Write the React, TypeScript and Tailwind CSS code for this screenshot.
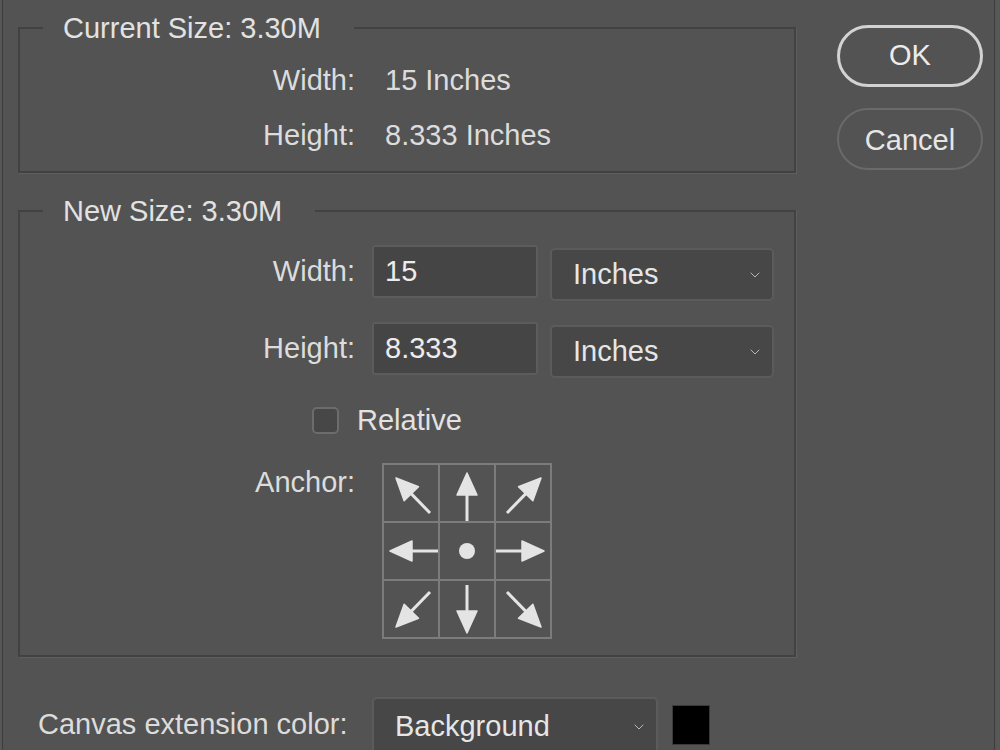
import { ChevronDown } from "lucide-react";

// tip/tail in cell coords (54x56), returns shaft end + head polygon
function arrowParts(tx: number, ty: number, ex: number, ey: number) {
  const dx = tx - ex;
  const dy = ty - ey;
  const len = Math.hypot(dx, dy);
  const ux = dx / len;
  const uy = dy / len;
  const headLen = 22;
  const half = 10;
  const bx = tx - ux * headLen;
  const by = ty - uy * headLen;
  const px = -uy;
  const py = ux;
  const points = `${tx},${ty} ${bx + px * half},${by + py * half} ${bx - px * half},${by - py * half}`;
  return { bx: tx - ux * (headLen - 2), by: ty - uy * (headLen - 2), points };
}

function Arrow({ tip, tail }: { tip: [number, number]; tail: [number, number] }) {
  const { bx, by, points } = arrowParts(tip[0], tip[1], tail[0], tail[1]);
  return (
    <svg viewBox="0 0 54 56" className="w-[54px] h-[56px]">
      <line x1={tail[0]} y1={tail[1]} x2={bx} y2={by} stroke="#e4e4e4" strokeWidth={3} />
      <polygon points={points} fill="#e4e4e4" stroke="#e4e4e4" strokeWidth={1.5} strokeLinejoin="round" />
    </svg>
  );
}

const CELLS: ({ tip: [number, number]; tail: [number, number] } | null)[] = [
  { tip: [12, 13], tail: [46, 48] },
  { tip: [27, 8], tail: [27, 56] },
  { tip: [45, 13], tail: [11, 48] },
  { tip: [6, 28], tail: [54, 28] },
  null,
  { tip: [48, 28], tail: [0, 28] },
  { tip: [12, 46], tail: [46, 11] },
  { tip: [27, 52], tail: [27, 4] },
  { tip: [45, 46], tail: [11, 11] },
];

function Select({ value, className }: { value: string; className: string }) {
  return (
    <div
      className={`flex items-center justify-between rounded-[5px] border-2 border-[#5b5b5b] bg-[#474747] pl-[21px] pr-[9px] text-[#e6e6e6] ${className}`}
    >
      <span>{value}</span>
      <ChevronDown className="w-[16px] h-[16px] text-[#b8b8b8]" strokeWidth={1.5} />
    </div>
  );
}

export default function App() {
  return (
    <div
      className="w-[1000px] h-[750px] overflow-hidden bg-[#575757] pl-[2px] pr-[5px] text-[29px] text-[#dcdcdc]"
      style={{ fontFamily: '"Liberation Sans", Arial, sans-serif' }}
    >
      <div className="h-full border-l border-r border-[#3d3d3d] bg-[#535353] flex flex-col">
        <div className="flex">
          {/* Left column */}
          <div className="pl-[15px] pt-[10px]">
            <fieldset className="w-[778px] border-2 border-[#424242] shadow-[1px_1px_0_#5e5e5e]">
              <legend className="ml-[23px] pl-[20px] pr-[33px] leading-[36px] text-[#e2e2e2]">
                Current Size: 3.30M
              </legend>
              <div className="grid grid-cols-[335px_1fr] gap-x-[30px] gap-y-[15px] pt-[15px] pb-[15px]">
                <div className="h-[40px] flex items-center justify-end">Width:</div>
                <div className="h-[40px] flex items-center">15 Inches</div>
                <div className="h-[40px] flex items-center justify-end">Height:</div>
                <div className="h-[40px] flex items-center">8.333 Inches</div>
              </div>
            </fieldset>

            <fieldset className="mt-[20px] w-[778px] border-2 border-[#424242] shadow-[1px_1px_0_#5e5e5e]">
              <legend className="ml-[23px] pl-[20px] pr-[33px] leading-[36px] text-[#e2e2e2]">
                New Size: 3.30M
              </legend>
              <div className="pt-[16px] pb-[16px]">
                <div className="flex items-start">
                  <div className="w-[335px] h-[53px] flex items-center justify-end">Width:</div>
                  <div className="ml-[17px] w-[166px] h-[53px] flex items-center rounded-[3px] border-2 border-[#5c5c5c] bg-[#454545] pl-[11px] text-[#ececec]">
                    15
                  </div>
                  <Select value="Inches" className="ml-[12px] mt-[3px] w-[224px] h-[53px]" />
                </div>
                <div className="mt-[21px] flex items-start">
                  <div className="w-[335px] h-[53px] flex items-center justify-end">Height:</div>
                  <div className="ml-[17px] w-[166px] h-[53px] flex items-center rounded-[3px] border-2 border-[#5c5c5c] bg-[#454545] pl-[11px] text-[#ececec]">
                    8.333
                  </div>
                  <Select value="Inches" className="ml-[12px] mt-[3px] w-[224px] h-[53px]" />
                </div>
                <div className="mt-[24px] h-[36px] flex items-center">
                  <div className="ml-[292px] w-[27px] h-[27px] rounded-[5px] border-2 border-[#6c6c6c] bg-[#474747]" />
                  <span className="ml-[18px] leading-[36px] text-[#e2e2e2]">Relative</span>
                </div>
                <div className="mt-[25px] flex items-start">
                  <div className="w-[335px] h-[40px] flex items-center justify-end">Anchor:</div>
                  <div className="ml-[27px] grid grid-cols-3 gap-[2px] bg-[#7c7c7c] p-[2px]">
                    {CELLS.map((c, i) => (
                      <div key={i} className="w-[54px] h-[56px] bg-[#535353] flex items-center justify-center">
                        {c ? (
                          <Arrow tip={c.tip} tail={c.tail} />
                        ) : (
                          <div className="w-[16px] h-[16px] rounded-full bg-[#e4e4e4]" />
                        )}
                      </div>
                    ))}
                  </div>
                </div>
              </div>
            </fieldset>
          </div>

          {/* Buttons */}
          <div className="ml-[41px] pt-[25px] flex flex-col">
            <button className="w-[146px] h-[62px] rounded-full border-[3px] border-[#d2d2d2] text-[#ececec]">
              OK
            </button>
            <button className="mt-[21px] w-[146px] h-[62px] rounded-full border-2 border-[#6a6a6a] pt-[3px] text-[#e6e6e6]">
              Cancel
            </button>
          </div>
        </div>

        {/* Bottom row */}
        <div className="mt-[40px] pl-[35px] flex items-start">
          <div className="w-[319px] h-[56px] flex items-center whitespace-nowrap">Canvas extension color:</div>
          <Select value="Background" className="ml-[15px] w-[286px] h-[60px]" />
          <div className="ml-[14px] mt-[8px] w-[38px] h-[40px] bg-black border border-[#3a3a3a]" />
        </div>
      </div>
    </div>
  );
}
